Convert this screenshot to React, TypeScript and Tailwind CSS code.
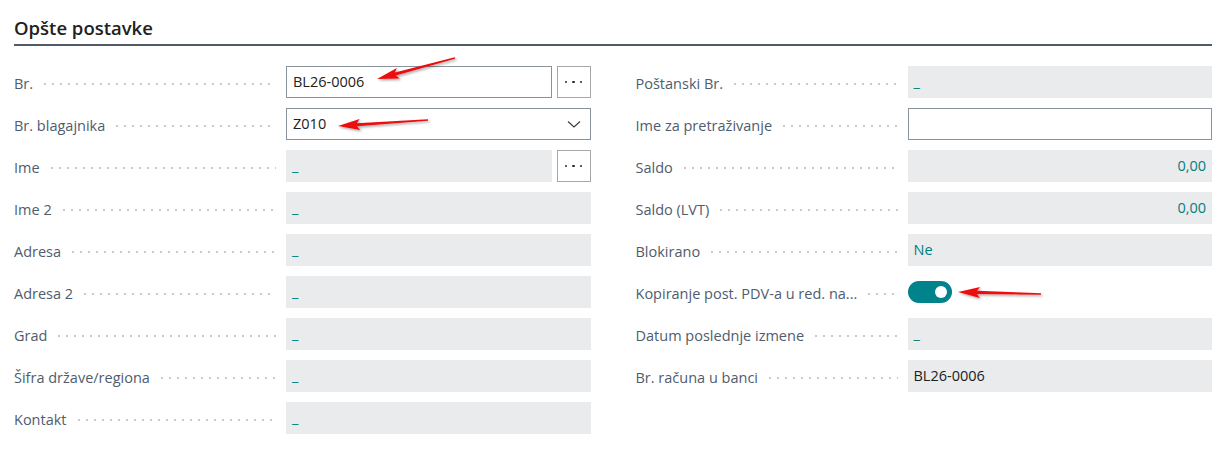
import React from 'react';

type Field = {
  label: string;
  kind: 'input' | 'lookup' | 'select' | 'readonly' | 'toggle' | 'empty';
  value?: string;
  teal?: boolean;
  right?: boolean;
  more?: boolean;
};

const leftFields: Field[] = [
  { label: 'Br.', kind: 'input', value: 'BL26-0006', more: true },
  { label: 'Br. blagajnika', kind: 'select', value: 'Z010' },
  { label: 'Ime', kind: 'readonly', value: '_', teal: true, more: true },
  { label: 'Ime 2', kind: 'readonly', value: '_', teal: true },
  { label: 'Adresa', kind: 'readonly', value: '_', teal: true },
  { label: 'Adresa 2', kind: 'readonly', value: '_', teal: true },
  { label: 'Grad', kind: 'readonly', value: '_', teal: true },
  { label: 'Šifra države/regiona', kind: 'readonly', value: '_', teal: true },
  { label: 'Kontakt', kind: 'readonly', value: '_', teal: true },
];

const rightFields: Field[] = [
  { label: 'Poštanski Br.', kind: 'readonly', value: '_', teal: true },
  { label: 'Ime za pretraživanje', kind: 'empty' },
  { label: 'Saldo', kind: 'readonly', value: '0,00', teal: true, right: true },
  { label: 'Saldo (LVT)', kind: 'readonly', value: '0,00', teal: true, right: true },
  { label: 'Blokirano', kind: 'readonly', value: 'Ne', teal: true },
  { label: 'Kopiranje post. PDV-a u red. na...', kind: 'toggle' },
  { label: 'Datum poslednje izmene', kind: 'readonly', value: '_', teal: true },
  { label: 'Br. računa u banci', kind: 'readonly', value: 'BL26-0006' },
];

function MoreButton() {
  return (
    <button className="ml-[5px] w-[34px] h-8 shrink-0 border border-[#a8a8a8] bg-white flex items-center justify-center gap-[5px]">
      <span className="w-[2.5px] h-[2.5px] rounded-full bg-[#2a2a2a]" />
      <span className="w-[2.5px] h-[2.5px] rounded-full bg-[#2a2a2a]" />
      <span className="w-[2.5px] h-[2.5px] rounded-full bg-[#2a2a2a]" />
    </button>
  );
}

function FieldControl({ f }: { f: Field }) {
  if (f.kind === 'toggle') {
    return (
      <div className="flex-1 h-8 flex items-center">
        <div className="w-[44px] h-[22px] rounded-full bg-[#00838a] flex items-center justify-end pr-[5px]">
          <span className="w-[12px] h-[12px] rounded-full bg-white" />
        </div>
      </div>
    );
  }
  if (f.kind === 'select') {
    return (
      <div className="flex-1 h-8 border border-[#8a929c] bg-white flex items-center pl-[6px] pr-[8px] text-[#212121]">
        <span className="flex-1">{f.value}</span>
        <svg width="16" height="16" viewBox="0 0 16 16" fill="none">
          <path d="M2 5.5 8 11l6-5.5" stroke="#3a3a3a" strokeWidth="1.1" />
        </svg>
      </div>
    );
  }
  const box =
    f.kind === 'readonly'
      ? 'bg-[#eaebec]'
      : 'bg-white border border-[#8a929c]';
  const color = f.teal ? 'text-[#00807f]' : 'text-[#212121]';
  return (
    <div className="flex-1 flex">
      <div
        className={`flex-1 h-8 flex items-center px-[6px] ${box} ${color} ${
          f.right ? 'justify-end' : ''
        }`}
      >
        {f.value}
      </div>
      {f.more && <MoreButton />}
    </div>
  );
}

function Row({ f }: { f: Field }) {
  return (
    <div className="flex items-center h-8">
      <div className="w-[272px] shrink-0 flex items-center pr-[10px] pt-[3px]">
        <span className="text-[#505c6d] whitespace-nowrap">{f.label}</span>
        <span className="flex-1 ml-[8px] h-[2px] bg-[radial-gradient(circle,#cacaca_0.8px,transparent_1.1px)] bg-[length:8px_2px] bg-repeat-x" />
      </div>
      <FieldControl f={f} />
    </div>
  );
}

function Arrow({ x1, y1, x2, y2 }: { x1: number; y1: number; x2: number; y2: number }) {
  // tail (x1,y1) -> tip (x2,y2)
  const dx = x2 - x1;
  const dy = y2 - y1;
  const len = Math.hypot(dx, dy);
  const ux = dx / len;
  const uy = dy / len;
  const nx = -uy;
  const ny = ux;
  const headLen = 22;
  const bx = x2 - ux * headLen;
  const by = y2 - uy * headLen;
  const pts = [
    [x1 + nx * 0.8, y1 + ny * 0.8],
    [bx + ux * 3 + nx * 1.6, by + uy * 3 + ny * 1.6],
    [bx + nx * 5.5, by + ny * 5.5],
    [x2, y2],
    [bx - nx * 5.5, by - ny * 5.5],
    [bx + ux * 3 - nx * 1.6, by + uy * 3 - ny * 1.6],
    [x1 - nx * 0.8, y1 - ny * 0.8],
  ]
    .map((p) => p.join(','))
    .join(' ');
  return <polygon points={pts} fill="#ec1111" filter="url(#shadow)" />;
}

export default function App() {
  return (
    <div className="relative w-[1223px] h-[451px] bg-white font-['Open_Sans','Noto_Sans',sans-serif] text-[14.5px] overflow-hidden">
      <div className="ml-[14px] w-[1198px]">
        {/* Section header */}
        <div className="h-[46px] border-b-2 border-[#505a6b] flex items-end pb-[4px]">
          <h2 className="text-[18.5px] font-semibold text-[#212121] leading-[24px]">Opšte postavke</h2>
        </div>

        <div className="grid grid-cols-2 gap-x-[45px] pt-[20px]">
          <div className="flex flex-col gap-[10px]">
            {leftFields.map((f) => (
              <Row key={f.label} f={f} />
            ))}
          </div>
          <div className="flex flex-col gap-[10px]">
            {rightFields.map((f) => (
              <Row key={f.label} f={f} />
            ))}
          </div>
        </div>
      </div>

      {/* Annotation arrows */}
      <svg className="absolute inset-0 pointer-events-none" width="1223" height="451">
        <defs>
          <filter id="shadow" x="-20%" y="-50%" width="140%" height="200%">
            <feDropShadow dx="1.5" dy="1.5" stdDeviation="1.2" floodColor="#000" floodOpacity="0.35" />
          </filter>
        </defs>
        <Arrow x1={455} y1={58} x2={377} y2={79} />
        <Arrow x1={428} y1={120} x2={338} y2={126} />
        <Arrow x1={1041} y1={294} x2={958} y2={292} />
      </svg>
    </div>
  );
}
